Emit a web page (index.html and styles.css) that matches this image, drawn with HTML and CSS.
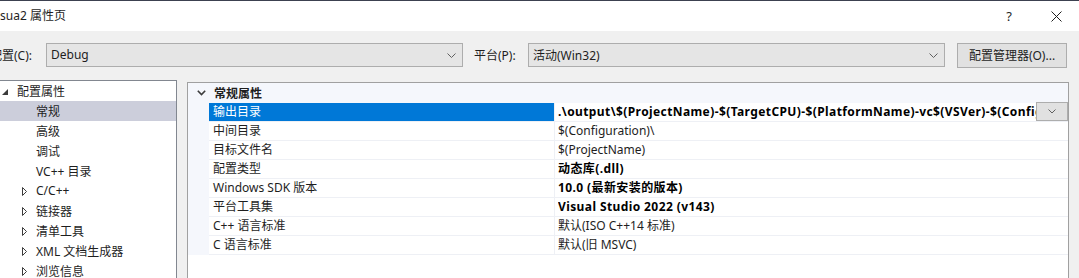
FILE: index.html
```html
<!DOCTYPE html>
<html lang="zh-CN">
<head>
    <meta charset="UTF-8">
    <title>属性页</title>
    <link rel="stylesheet" href="styles.css">
</head>
<body>

<div class="window">
    <!-- title bar -->
    <div class="titlebar">
        <span class="title">sua2 属性页</span>
        <span class="help">?</span>
        <span class="close">
            <svg width="11" height="11" viewBox="0 0 11 11"><path d="M0.5 0.5 L10.5 10.5 M10.5 0.5 L0.5 10.5" stroke="#1e1e1e" stroke-width="1" fill="none"/></svg>
        </span>
    </div>

    <!-- configuration / platform bar -->
    <div class="toolbar">
        <span class="label first">配置(C):</span>
        <div class="combo">
            <span>Debug</span>
            <svg class="chev" width="9" height="5" viewBox="0 0 9 5"><path d="M0.5 0.5 L4.5 4.5 L8.5 0.5" stroke="#606060" fill="none"/></svg>
        </div>
        <span class="label second">平台(P):</span>
        <div class="combo">
            <span>活动(Win32)</span>
            <svg class="chev" width="9" height="5" viewBox="0 0 9 5"><path d="M0.5 0.5 L4.5 4.5 L8.5 0.5" stroke="#606060" fill="none"/></svg>
        </div>
        <button class="cfg-btn">配置管理器(O)...</button>
    </div>

    <div class="main">
        <!-- left tree -->
        <div class="tree">
            <div class="node root">
                <svg class="tri" width="6" height="6" viewBox="0 0 6 6"><path d="M6 0 L6 6 L0 6 Z" fill="#3c3c3c"/></svg>
                <span>配置属性</span>
            </div>
            <div class="node leaf selected"><span>常规</span></div>
            <div class="node leaf"><span>高级</span></div>
            <div class="node leaf"><span>调试</span></div>
            <div class="node leaf"><span>VC++ 目录</span></div>
            <div class="node branch">
                <svg class="tri" width="5" height="9" viewBox="0 0 5 9"><path d="M0.5 0.5 L4.5 4.5 L0.5 8.5 Z" stroke="#3c3c3c" fill="none"/></svg>
                <span>C/C++</span>
            </div>
            <div class="node branch">
                <svg class="tri" width="5" height="9" viewBox="0 0 5 9"><path d="M0.5 0.5 L4.5 4.5 L0.5 8.5 Z" stroke="#3c3c3c" fill="none"/></svg>
                <span>链接器</span>
            </div>
            <div class="node branch">
                <svg class="tri" width="5" height="9" viewBox="0 0 5 9"><path d="M0.5 0.5 L4.5 4.5 L0.5 8.5 Z" stroke="#3c3c3c" fill="none"/></svg>
                <span>清单工具</span>
            </div>
            <div class="node branch">
                <svg class="tri" width="5" height="9" viewBox="0 0 5 9"><path d="M0.5 0.5 L4.5 4.5 L0.5 8.5 Z" stroke="#3c3c3c" fill="none"/></svg>
                <span>XML 文档生成器</span>
            </div>
            <div class="node branch">
                <svg class="tri" width="5" height="9" viewBox="0 0 5 9"><path d="M0.5 0.5 L4.5 4.5 L0.5 8.5 Z" stroke="#3c3c3c" fill="none"/></svg>
                <span>浏览信息</span>
            </div>
        </div>

        <!-- property grid -->
        <div class="grid">
            <div class="category">
                <span class="cat-chev">
                    <svg width="9" height="6" viewBox="0 0 9 6"><path d="M0.8 0.8 L4.5 4.5 L8.2 0.8" stroke="#3c3c3c" stroke-width="1.6" fill="none"/></svg>
                </span>
                <span class="cat-name">常规属性</span>
            </div>
            <div class="rows">
                <div class="row active">
                    <div class="name">输出目录</div>
                    <div class="value bold">
                        <span class="value-text">.\output\$(ProjectName)-$(TargetCPU)-$(PlatformName)-vc$(VSVer)-$(Configuration)\</span>
                        <span class="drop">
                            <svg width="8" height="5" viewBox="0 0 8 5"><path d="M0.5 0.5 L4 4 L7.5 0.5" stroke="#606060" fill="none"/></svg>
                        </span>
                    </div>
                </div>
                <div class="row">
                    <div class="name">中间目录</div>
                    <div class="value"><span class="value-text">$(Configuration)\</span></div>
                </div>
                <div class="row">
                    <div class="name">目标文件名</div>
                    <div class="value"><span class="value-text">$(ProjectName)</span></div>
                </div>
                <div class="row">
                    <div class="name">配置类型</div>
                    <div class="value bold"><span class="value-text">动态库(.dll)</span></div>
                </div>
                <div class="row">
                    <div class="name">Windows SDK 版本</div>
                    <div class="value bold"><span class="value-text">10.0 (最新安装的版本)</span></div>
                </div>
                <div class="row">
                    <div class="name">平台工具集</div>
                    <div class="value bold"><span class="value-text">Visual Studio 2022 (v143)</span></div>
                </div>
                <div class="row">
                    <div class="name">C++ 语言标准</div>
                    <div class="value"><span class="value-text">默认(ISO C++14 标准)</span></div>
                </div>
                <div class="row">
                    <div class="name">C 语言标准</div>
                    <div class="value"><span class="value-text">默认(旧 MSVC)</span></div>
                </div>
            </div>
        </div>
    </div>
</div>

</body>
</html>
```

FILE: styles.css
```css
/* Visual Studio property page dialog */
body {
    margin: 0;
    background-color: #f0f0f0;
    font-family: 'Noto Sans', 'Noto Sans CJK SC', sans-serif;
    font-size: 12px;
    color: #1e1e1e;
}

.window {
    width: 1079px;
    height: 278px;
    overflow: hidden;
}

/* Title bar */
.titlebar {
    height: 30px;
    background-color: #fff;
    border-top: 1px solid #3c4150;
    display: flex;
    align-items: center;
}

.title {
    flex: 1;
    padding-bottom: 2px;
}

.help {
    width: 46px;
    text-align: center;
    font-size: 13px;
    margin-right: 1px;
}

.close {
    width: 46px;
    display: flex;
    justify-content: center;
}

/* Config bar */
.toolbar {
    height: 48px;
    display: flex;
    align-items: center;
    padding-bottom: 1px;
}

.label {
    white-space: nowrap;
    flex: none;
}

.label.first {
    margin-left: -10px;
    width: 56px;
}

.label.second {
    margin-left: 11px;
    width: 54px;
}

.combo {
    flex: none;
    height: 24px;
    width: 417px;
    box-sizing: border-box;
    border: 1px solid #adadad;
    background-color: #e5e5e5;
    display: flex;
    align-items: center;
    justify-content: space-between;
    padding: 0 6px 0 4px;
}

.combo span {
    padding-bottom: 1px;
}

.cfg-btn {
    flex: none;
    margin-left: 12px;
    width: 110px;
    height: 25px;
    border: 1px solid #adadad;
    background-color: #e1e1e1;
    font-family: inherit;
    font-size: 12px;
    color: #1e1e1e;
    padding: 0 0 1px;
}

/* Main area */
.main {
    display: flex;
    align-items: flex-start;
}

.tree {
    width: 176px;
    height: 210px;
    background-color: #fff;
    border-top: 1px solid #828790;
    border-right: 1px solid #828790;
}

.node {
    height: 20px;
    display: flex;
    align-items: center;
    white-space: nowrap;
}

.node span {
    padding-bottom: 1px;
}

.node.root {
    padding-left: 2px;
}

.node.root .tri {
    margin-right: 9px;
    margin-top: 1px;
}

.node.leaf {
    padding-left: 36px;
}

.node.branch {
    padding-left: 22px;
}

.node.branch .tri {
    margin-right: 9px;
}

.node.selected {
    background-color: #cccedb;
}

/* Property grid */
.grid {
    margin-left: 10px;
    margin-top: 2px;
    width: 880px;
    height: 210px;
    background-color: #fff;
    border: 1px solid #a0a0a0;
    border-bottom: none;
}

.category {
    height: 20px;
    display: flex;
    align-items: center;
    background-color: #f5f7fc;
}

.cat-chev {
    width: 25px;
    display: flex;
    justify-content: center;
    padding-left: 1px;
}

.cat-name {
    font-weight: bold;
    padding-bottom: 1px;
}

.rows {
    border-left: 21px solid #f5f7fc;
}

.row {
    height: 19px;
    display: flex;
    box-sizing: border-box;
    border-bottom: 1px solid #eef0f5;
}

.name {
    width: 341px;
    padding-left: 4px;
    border-right: 1px solid #eef0f5;
    white-space: nowrap;
    line-height: 17px;
}

.row.active .name {
    background-color: #0078d7;
    color: #fff;
}

.value {
    flex: 1;
    display: flex;
    min-width: 0;
    padding-left: 3px;
    line-height: 17px;
}

.value-text {
    flex: 1;
    overflow: hidden;
    white-space: nowrap;
}

.value.bold {
    font-weight: bold;
    color: #000;
    letter-spacing: 0.4px;
}

.drop {
    width: 30px;
    height: 17px;
    border: 1px solid #adadad;
    background-color: #e1e1e1;
    display: flex;
    align-items: center;
    justify-content: center;
    margin-top: -1px;
    letter-spacing: 0;
}
```
